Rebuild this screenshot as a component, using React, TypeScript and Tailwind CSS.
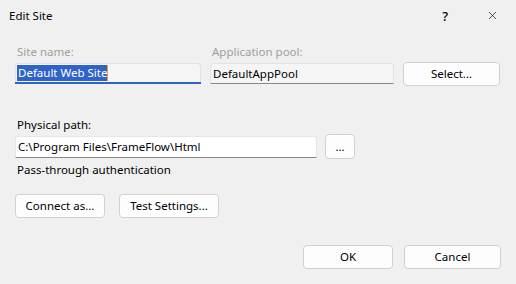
import { X } from "lucide-react";

const font = { fontFamily: '"Noto Sans", "Open Sans", sans-serif' };

function Btn({ label, className = "" }: { label: string; className?: string }) {
    return (
        <button
            className={`flex shrink-0 items-center justify-center rounded-[4px] border border-[#d1d1d1] bg-[#fdfdfd] text-[11.5px] text-black ${className}`}
        >
            {label}
        </button>
    );
}

export default function App() {
    return (
        <div className="h-[284px] w-[516px] overflow-hidden bg-[#f0f0f0] text-[11.5px] leading-[12px] text-black" style={font}>
            {/* title bar */}
            <div className="flex h-[31px] items-center pl-[9px]">
                <span>Edit Site</span>
                <span className="ml-auto mr-[38px] text-[13px] font-medium">?</span>
                <X className="mr-[17px] h-[13px] w-[13px]" strokeWidth={1.2} />
            </div>

            <div className="pl-[15px]">
                {/* labels */}
                <div className="mt-[15px] flex text-[#9f9f9f]">
                    <div className="w-[195px] pl-[2px]">Site name:</div>
                    <div className="pl-[2px]">Application pool:</div>
                </div>

                {/* site / app pool inputs */}
                <div className="mt-[5px] flex h-[21px] items-start">
                    <div className="w-[186px]">
                        <div className="flex h-[19px] items-center rounded-t-[3px] border border-b-0 border-[#e3e3e3] bg-[#f5f5f5] pl-[1px]">
                            <span className="relative bg-[#2f63c9] px-[1px] py-[2px] text-white">
                                Default Web Site
                                <span className="absolute right-0 top-0 h-full w-[1px] bg-[#f0a030]" />
                            </span>
                        </div>
                        <div className="h-[2px] bg-[#2f63c9]" />
                    </div>
                    <div className="ml-[9px] flex h-[21px] w-[184px] items-center rounded-t-[3px] border border-b-[#8a8a8a] border-[#e3e3e3] bg-[#f5f5f5] pl-[2px]">
                        DefaultAppPool
                    </div>
                    <Btn label="Select..." className="-mt-[1px] ml-[9px] h-[24px] w-[97px]" />
                </div>

                {/* physical path */}
                <div className="mt-[35px] pl-[2px]">Physical path:</div>
                <div className="mt-[3px] flex h-[25px] items-center">
                    <div className="flex h-[22px] w-[302px] items-center rounded-t-[3px] border border-b-[#8a8a8a] border-[#e6e6e6] bg-white pl-[2px]">
                        C:\Program Files\FrameFlow\Html
                    </div>
                    <Btn label="..." className="ml-[8px] h-[25px] w-[30px]" />
                </div>
                <div className="mt-[5px] pl-[2px]">Pass-through authentication</div>

                <div className="mt-[18px] flex gap-[14px]">
                    <Btn label="Connect as..." className="h-[24px] w-[90px]" />
                    <Btn label="Test Settings..." className="h-[24px] w-[100px]" />
                </div>

                <div className="mt-[27px] flex justify-end gap-[11px] pr-[15px]">
                    <Btn label="OK" className="h-[24px] w-[90px] border-[#3a6ec9]" />
                    <Btn label="Cancel" className="h-[24px] w-[97px]" />
                </div>
            </div>
        </div>
    );
}
